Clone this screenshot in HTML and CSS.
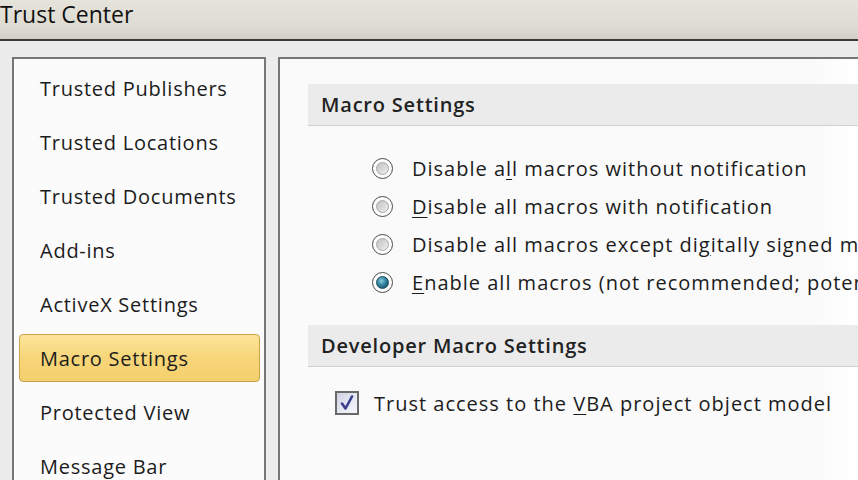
FILE: index.html
```html
<!DOCTYPE html>
<html>
<head>
<meta charset="utf-8">
<link rel="stylesheet" href="styles.css">
</head>
<body>
<div class="window">
  <div class="titlebar">Trust Center</div>
  <div class="main">
    <nav class="nav">
      <div class="nav-item">Trusted Publishers</div>
      <div class="nav-item">Trusted Locations</div>
      <div class="nav-item">Trusted Documents</div>
      <div class="nav-item">Add-ins</div>
      <div class="nav-item">ActiveX Settings</div>
      <div class="nav-item selected">Macro Settings</div>
      <div class="nav-item">Protected View</div>
      <div class="nav-item">Message Bar</div>
    </nav>
    <section class="content">
      <div class="section-header">Macro Settings</div>
      <div class="options">
        <div class="option"><span class="radio"></span><span class="label">Disable a<u>l</u>l macros without notification</span></div>
        <div class="option"><span class="radio"></span><span class="label"><u>D</u>isable all macros with notification</span></div>
        <div class="option"><span class="radio"></span><span class="label">Disable all macros except di<u>g</u>itally signed macros</span></div>
        <div class="option"><span class="radio checked"></span><span class="label"><u>E</u>nable all macros (not recommended; potentially dangerous code can run)</span></div>
      </div>
      <div class="section-header dev">Developer Macro Settings</div>
      <div class="check-row">
        <span class="checkbox">
          <svg viewBox="0 0 20 20" width="20" height="20"><path d="M5 10.5 L8.5 15.5 L15 3.5" fill="none" stroke="#3b3f8c" stroke-width="2.6" stroke-linecap="round" stroke-linejoin="round"/></svg>
        </span>
        <span class="label">Trust access to the <u>V</u>BA project object model</span>
      </div>
    </section>
  </div>
</div>
</body>
</html>
```

FILE: styles.css
```css
html, body {
  margin: 0;
  padding: 0;
}
body {
  width: 858px;
  height: 480px;
  overflow: hidden;
  background: #ececec;
  font-family: "Open Sans", "Noto Sans", sans-serif;
  color: #1c1c1c;
}
.window {
  display: flex;
  flex-direction: column;
  height: 480px;
}
.titlebar {
  flex: none;
  height: 41px;
  box-sizing: border-box;
  border-bottom: 2px solid #3c3b36;
  background: linear-gradient(to bottom, #e6e4da 0%, #dedcd2 70%, #d2d0c6 100%);
  font-size: 23px;
  line-height: 28px;
  padding-top: 0;
  color: #111;
  white-space: nowrap;
}
.main {
  flex: 1;
  display: flex;
  gap: 12px;
  padding: 16px 0 0 12px;
  min-height: 0;
  overflow: hidden;
}
.nav {
  width: 254px;
  flex: none;
  box-sizing: border-box;
  border: 2px solid #767676;
  border-bottom: none;
  background: #fbfbfb;
  padding: 2px 4px 0 5px;
  display: flex;
  flex-direction: column;
}
.nav-item {
  flex: none;
  height: 48px;
  margin: 3px 0;
  box-sizing: border-box;
  border: 1px solid transparent;
  border-radius: 4px;
  padding-left: 20px;
  display: flex;
  align-items: center;
  font-size: 20px;
  letter-spacing: 0.75px;
  white-space: nowrap;
}
.nav-item.selected {
  background: linear-gradient(to bottom, #fbe49a 0%, #f7d67a 50%, #f4cf6c 100%);
  border-color: #c9a24a;
}
.content {
  flex: 1;
  box-sizing: border-box;
  border: 2px solid #767676;
  border-right: none;
  border-bottom: none;
  background: linear-gradient(to right, #fafafa 0%, #fafafa 92%, #ffffff 100%);
  padding: 25px 0 0 28px;
  display: flex;
  flex-direction: column;
  min-width: 0;
  overflow: hidden;
}
.section-header {
  flex: none;
  height: 42px;
  box-sizing: border-box;
  background: #ebebeb;
  border-bottom: 1px solid #d0d0d0;
  padding-left: 13px;
  display: flex;
  align-items: center;
  font-size: 20px;
  font-weight: 600;
  letter-spacing: 0.8px;
  color: #222;
  white-space: nowrap;
}
.section-header.dev {
  margin-top: 24px;
}
.options {
  flex: none;
  margin-top: 23px;
  display: flex;
  flex-direction: column;
  padding-left: 64px;
}
.option {
  flex: none;
  height: 38px;
  display: flex;
  align-items: center;
  gap: 19px;
  white-space: nowrap;
}
.label {
  font-size: 20px;
  letter-spacing: 1px;
  white-space: nowrap;
}
.radio {
  width: 21px;
  height: 21px;
  flex: none;
  box-sizing: border-box;
  border-radius: 50%;
  border: 1.5px solid #4a4a4a;
  background: #fdfdfd;
  display: flex;
  align-items: center;
  justify-content: center;
}
.radio::after {
  content: "";
  width: 13px;
  height: 13px;
  border-radius: 50%;
  box-sizing: border-box;
  border: 1px solid #a8a8a8;
  background: linear-gradient(135deg, #c2c2c2 0%, #dcdcdc 60%, #f0f0f0 100%);
}
.radio.checked::after {
  border-color: #1c4a5c;
  background: radial-gradient(circle at 40% 35%, #8fd0e4 0%, #3a8aa6 40%, #1a5670 80%, #103a4c 100%);
}
.check-row {
  flex: none;
  margin-top: 17px;
  height: 38px;
  display: flex;
  align-items: center;
  padding-left: 27px;
  gap: 15px;
}
.checkbox {
  width: 24px;
  height: 24px;
  flex: none;
  box-sizing: border-box;
  border: 2px solid #6a6a6a;
  background: linear-gradient(135deg, #d0d2e2 0%, #e8eaf4 60%, #f6f6fa 100%);
  display: flex;
  align-items: center;
  justify-content: center;
}
.checkbox svg {
  display: block;
}
u {
  text-decoration-thickness: 1px;
  text-underline-offset: 3px;
}
```
